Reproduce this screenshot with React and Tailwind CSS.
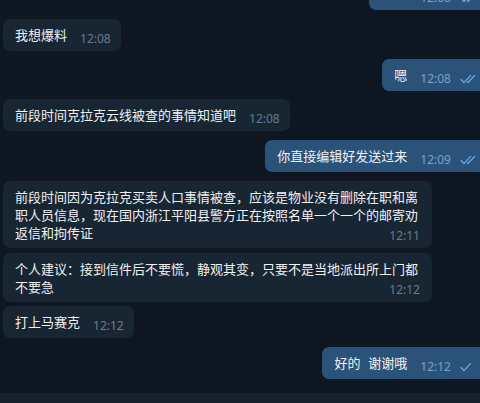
import React from "react";

const TEXT_FONT = { fontFamily: '"Noto Sans CJK SC", "Noto Sans", sans-serif' };
const TIME_FONT = { fontFamily: '"Noto Sans", "Open Sans", sans-serif' };

function Check({ double }) {
  return (
    <svg width="17" height="10" viewBox="0 0 17 10" fill="none" stroke="#5fa8e8" strokeWidth="1.4" strokeLinecap="round" strokeLinejoin="round" className="ml-[9px] shrink-0">
      <path d="M1.2 5.6 L4 8.6 L10.6 1.4" />
      {double && <path d="M7.4 8.1 L7.9 8.6 L14.6 1.4" />}
    </svg>
  );
}

function Time({ children, out }) {
  return (
    <span
      style={TIME_FONT}
      className={`text-[12px] leading-[12px] mb-[-1px] shrink-0 ${out ? "text-[#7aa0c8]" : "text-[#6a7b8b]"}`}
    >
      {children}
    </span>
  );
}

function In({ text, time, className = "" }) {
  return (
    <div className={`flex ${className}`}>
      <div className="flex items-end rounded-[7px] bg-[#182533] pl-3 pr-[10px] py-[7px]">
        <span style={TEXT_FONT} className="text-[13px] leading-[18px] text-[#f1f1f1]">{text}</span>
        <span className="ml-[13px] flex"><Time>{time}</Time></span>
      </div>
    </div>
  );
}

function InLong({ text, time, className = "" }) {
  return (
    <div className={`flex ${className}`}>
      <div className="flex w-[429px] flex-col rounded-[7px] bg-[#182533] px-3 py-[7px]">
        <div style={TEXT_FONT} className="text-[13px] leading-[18px] text-[#f1f1f1]">{text}</div>
        <div className="-mt-[12px] flex self-end"><Time>{time}</Time></div>
      </div>
    </div>
  );
}

function Out({ text, time, double = true, className = "", textClass = "" }) {
  return (
    <div className={`flex justify-end mr-[-7px] ${className}`}>
      <div className="flex items-end rounded-[7px] bg-[#2b5278] pl-3 pr-[10px] py-[7px]">
        <span style={TEXT_FONT} className={`text-[13px] leading-[18px] text-[#f1f1f1] ${textClass}`}>{text}</span>
        <span className="ml-[13px] flex"><Time out>{time}</Time></span>
        <Check double={double} />
      </div>
    </div>
  );
}

export default function App() {
  return (
    <div className="flex h-[403px] w-[480px] flex-col overflow-hidden bg-[#0e1621]">
      <div className="flex flex-1 flex-col pl-[3px]">
        <div className="-mt-[33px] mr-[-7px] flex justify-end">
          <div className="flex w-[118px] flex-col rounded-[7px] bg-[#2b5278] pl-3 pr-[10px] py-[7px]">
            <div className="h-[18px]" />
            <div className="flex items-end justify-end">
              <Time out>12:08</Time>
              <Check double />
            </div>
          </div>
        </div>
        <In text="我想爆料" time="12:08" className="mt-[9px]" />
        <Out text="嗯" time="12:08" className="mt-[8px]" />
        <In text="前段时间克拉克云线被查的事情知道吧" time="12:08" className="mt-[8px]" />
        <Out text="你直接编辑好发送过来" time="12:09" className="mt-[9px]" />
        <InLong
          text="前段时间因为克拉克买卖人口事情被查，应该是物业没有删除在职和离职人员信息，现在国内浙江平阳县警方正在按照名单一个一个的邮寄劝返信和拘传证"
          time="12:11"
          className="mt-[9px]"
        />
        <InLong
          text="个人建议：接到信件后不要慌，静观其变，只要不是当地派出所上门都不要急"
          time="12:12"
          className="mt-[5px]"
        />
        <In text="打上马赛克" time="12:12" className="mt-[4px]" />
        <Out text="好的 谢谢哦" time="12:12" double={false} className="mt-[9px]" textClass="[word-spacing:5px]" />
      </div>
      <div className="h-[10px] shrink-0 bg-[#17212b]" />
    </div>
  );
}
